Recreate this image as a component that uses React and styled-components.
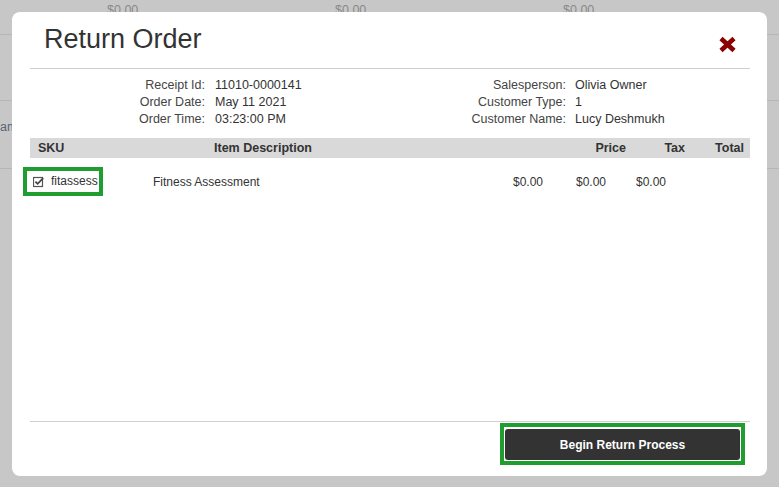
import React from "react";
import styled, { createGlobalStyle } from "styled-components";

const Global = createGlobalStyle`
  html, body { margin: 0; padding: 0; }
  body {
    width: 779px;
    height: 487px;
    overflow: hidden;
    background: #c7c7c7;
    font-family: "Liberation Sans", Arial, sans-serif;
  }
`;

const Page = styled.div`
  position: relative;
  width: 779px;
  height: 487px;
  overflow: hidden;
  background: #c7c7c7;
`;

const BgRow = styled.div`
  height: ${(p) => p.$h}px;
  border-bottom: 1px solid #b6b6b6;
  box-sizing: border-box;
  display: grid;
  grid-template-columns: repeat(3, 228px);
  padding-left: ${(p) => p.$pl || 0}px;
  padding-top: ${(p) => p.$pt || 0}px;
  font-size: 12.5px;
  line-height: 16px;
  color: ${(p) => p.$color || "#8a8a8a"};
`;

const Modal = styled.div`
  position: absolute;
  left: 12px;
  top: 12px;
  width: 755px;
  height: 464px;
  box-sizing: border-box;
  background: #fff;
  border-radius: 8px;
  padding: 0 17px 0 18px;
  display: flex;
  flex-direction: column;
  color: #333;
`;

const Header = styled.div`
  display: flex;
  justify-content: space-between;
  align-items: flex-start;
  height: 56px;
  border-bottom: 1px solid #cfcfcf;
  padding: 0 13px 0 14px;
`;

const Title = styled.h1`
  margin: 12px 0 0;
  font-size: 27px;
  line-height: 30px;
  font-weight: normal;
  color: #333;
`;

const CloseBtn = styled.button`
  margin-top: 24px;
  padding: 0;
  border: 0;
  background: none;
  width: 19px;
  height: 17px;
  display: flex;
  cursor: pointer;
`;

const Info = styled.div`
  display: grid;
  grid-template-columns: 175px 1fr auto 184px;
  grid-auto-rows: 17px;
  padding-top: 8px;
  font-size: 12.5px;
  line-height: 17px;
  color: #333;
`;

const Label = styled.div`
  text-align: right;
  color: #444;
`;

const Value = styled.div`
  padding-left: ${(p) => p.$pl}px;
  white-space: nowrap;
`;

const TableHead = styled.div`
  margin-top: 10px;
  display: grid;
  grid-template-columns: 184px 1fr 80px 59px 65px;
  height: 20px;
  align-items: center;
  background: #d9d9d9;
  font-size: 12.5px;
  font-weight: bold;
  color: #333;
`;

const HeadCell = styled.div`
  text-align: ${(p) => p.$align || "left"};
  padding-left: ${(p) => p.$pl || 0}px;
  padding-right: ${(p) => p.$pr || 0}px;
`;

const DataRow = styled.div`
  display: grid;
  grid-template-columns: 123px 1fr 63px 60px 114px;
  align-items: center;
  padding-top: 13px;
  font-size: 12px;
  color: #333;
`;

const SkuCell = styled.span`
  display: inline-flex;
  align-items: center;
  gap: 6px;
  margin-left: -3px;
  width: 72px;
  height: 21px;
  box-sizing: border-box;
  padding-left: 6px;
  outline: 4px solid #1f9d2f;
`;

const Cell = styled.div`
  line-height: 21px;
`;

const Spacer = styled.div`
  flex: 1;
`;

const Footer = styled.div`
  border-top: 1px solid #cfcfcf;
  display: flex;
  justify-content: flex-end;
  padding: 1px 5px 11px 0;
`;

const Highlight = styled.div`
  border: 4px solid #1f9d2f;
  padding: 2px 1px 1px;
  display: flex;
`;

const PrimaryButton = styled.button`
  width: 235px;
  height: 31px;
  border: 0;
  border-radius: 3px;
  background: #333;
  color: #fff;
  font-family: "Liberation Sans", Arial, sans-serif;
  font-size: 12px;
  font-weight: bold;
  cursor: pointer;
`;

const CloseIcon = () => (
  <svg width="19" height="17" viewBox="0 0 19 17">
    <path d="M3 2.5 L16 14.5 M16 2.5 L3 14.5" stroke="#8b0000" strokeWidth="4.6" strokeLinecap="butt" fill="none" />
  </svg>
);

const CheckIcon = () => (
  <svg width="12" height="12" viewBox="0 0 12 12">
    <rect x="0.5" y="1.5" width="9" height="9" fill="none" stroke="#555" strokeWidth="1.2" />
    <path d="M2.4 5.6 L4.6 7.8 L10.2 2.2" fill="none" stroke="#444" strokeWidth="1.8" />
  </svg>
);

export default function App() {
  return (
    <>
      <Global />
      <Page>
        <BgRow $h={35} $pl={107} $pt={2}>
          <span>$0.00</span>
          <span>$0.00</span>
          <span>$0.00</span>
        </BgRow>
        <BgRow $h={66} />
        <BgRow $h={68} $pt={18} $color="#566579">
          <span>am</span>
        </BgRow>
        <Modal>
          <Header>
            <Title>Return Order</Title>
            <CloseBtn aria-label="Close">
              <CloseIcon />
            </CloseBtn>
          </Header>
          <Info>
            <Label>Receipt Id:</Label>
            <Value $pl={10}>11010-0000141</Value>
            <Label>Salesperson:</Label>
            <Value $pl={9}>Olivia Owner</Value>
            <Label>Order Date:</Label>
            <Value $pl={10}>May 11 2021</Value>
            <Label>Customer Type:</Label>
            <Value $pl={9}>1</Value>
            <Label>Order Time:</Label>
            <Value $pl={10}>03:23:00 PM</Value>
            <Label>Customer Name:</Label>
            <Value $pl={9}>Lucy Deshmukh</Value>
          </Info>
          <TableHead>
            <HeadCell $pl={8}>SKU</HeadCell>
            <HeadCell>Item Description</HeadCell>
            <HeadCell $align="right">Price</HeadCell>
            <HeadCell $align="right">Tax</HeadCell>
            <HeadCell $align="right" $pr={6}>Total</HeadCell>
          </TableHead>
          <DataRow>
            <Cell>
              <SkuCell>
                <CheckIcon />
                fitassess
              </SkuCell>
            </Cell>
            <Cell>Fitness Assessment</Cell>
            <Cell>$0.00</Cell>
            <Cell>$0.00</Cell>
            <Cell>$0.00</Cell>
          </DataRow>
          <Spacer />
          <Footer>
            <Highlight>
              <PrimaryButton>Begin Return Process</PrimaryButton>
            </Highlight>
          </Footer>
        </Modal>
      </Page>
    </>
  );
}
